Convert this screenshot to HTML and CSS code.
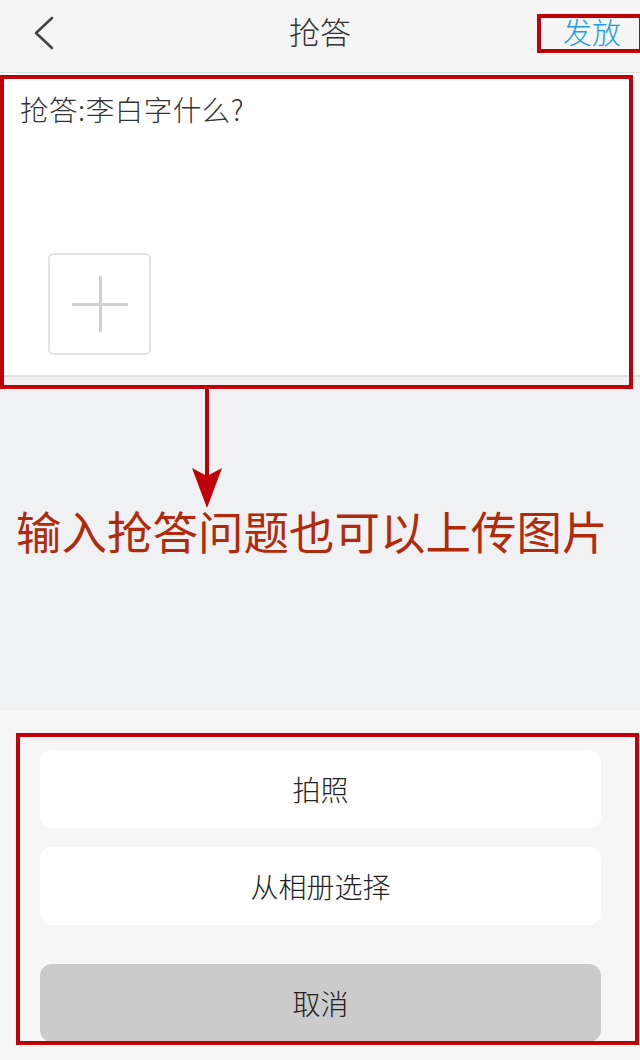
FILE: index.html
```html
<!DOCTYPE html>
<html lang="zh">
<head>
<meta charset="utf-8">
<title>抢答</title>
<link rel="stylesheet" href="styles.css">
</head>
<body>
<div class="page">
  <header class="topbar">
    <button class="back" aria-label="返回">
      <svg width="24" height="36" viewBox="0 0 24 36"><polyline points="19,2 3,17 19,32" fill="none" stroke="#444" stroke-width="2.6" stroke-linecap="round" stroke-linejoin="round"/></svg>
    </button>
    <h1 class="title">抢答</h1>
    <a class="publish">发放</a>
  </header>

  <section class="editor">
    <p class="question">抢答:李白字什么?</p>
    <div class="add-pic">
      <span class="plus-h"></span>
      <span class="plus-v"></span>
    </div>
  </section>

  <section class="middle">
    <p class="note">输入抢答问题也可以上传图片</p>
  </section>

  <section class="sheet">
    <div class="action">拍照</div>
    <div class="action">从相册选择</div>
    <div class="action cancel">取消</div>
  </section>

  <div class="mark mark-publish"></div>
  <div class="mark mark-editor"></div>
  <div class="mark mark-sheet"></div>
  <svg class="arrow" width="34" height="124" viewBox="0 0 34 124">
    <rect x="15" y="0" width="4" height="100" fill="#c00008"/>
    <polygon points="2,82 17,90 32,82 17,122" fill="#c00008"/>
  </svg>
</div>
</body>
</html>
```

FILE: styles.css
```css
* { box-sizing: border-box; }
html, body { margin: 0; padding: 0; }
body {
  font-family: "Noto Sans CJK SC", "Noto Sans", sans-serif;
  background: #f0f1f3;
}
.page {
  position: relative;
  width: 640px;
  height: 1060px;
  display: flex;
  flex-direction: column;
  overflow: hidden;
}
.topbar {
  height: 73px;
  flex: none;
  background: #f5f5f5;
  border-bottom: 1px solid #dcdcdc;
  display: grid;
  grid-template-columns: 120px 1fr 120px;
  align-items: center;
}
.back {
  border: 0;
  background: none;
  padding: 0 0 4px 33px;
  display: flex;
  align-items: center;
  justify-self: start;
}
.title {
  margin: 0;
  text-align: center;
  font-size: 31px;
  font-weight: 300;
  color: #333;
  line-height: 40px;
  padding-bottom: 10px;
}
.publish {
  justify-self: end;
  padding-right: 19px;
  padding-bottom: 10px;
  font-size: 29px;
  font-weight: 300;
  line-height: 40px;
  color: #1c9be8;
}
.editor {
  height: 304px;
  flex: none;
  background: #fff;
  border-bottom: 2px solid #e1e1e1;
  padding: 16px 20px 0;
}
.question {
  margin: 0;
  font-size: 28.5px;
  font-weight: 300;
  line-height: 40px;
  color: #333;
  letter-spacing: 0.5px;
}
.add-pic {
  position: relative;
  margin: 124px 0 0 28px;
  width: 103px;
  height: 102px;
  border: 2px solid #e2e2e2;
  border-radius: 6px;
}
.plus-h, .plus-v {
  position: absolute;
  background: #d0d0d0;
}
.plus-h { left: 22px; top: 48px; width: 56px; height: 3px; }
.plus-v { left: 49px; top: 21px; width: 3px; height: 56px; }
.middle {
  height: 333px;
  flex: none;
  padding: 123px 0 0 16px;
}
.note {
  margin: 0;
  font-size: 45.5px;
  line-height: 60px;
  color: #b12a0c;
  white-space: nowrap;
}
.sheet {
  flex: 1;
  background: #f6f6f6;
  padding: 40px 39px 0 40px;
  display: flex;
  flex-direction: column;
  gap: 19px;
}
.action {
  height: 78px;
  flex: none;
  background: #fff;
  border-radius: 12px;
  display: flex;
  align-items: center;
  justify-content: center;
  font-size: 28px;
  font-weight: 300;
  color: #222;
}
.action.cancel {
  margin-top: 20px;
  background: #cbcbcb;
}
.mark {
  position: absolute;
  border: 4px solid #c00008;
}
.mark-publish { left: 537px; top: 14px; width: 106px; height: 39px; }
.mark-editor { left: 0; top: 75px; width: 633px; height: 314px; }
.mark-sheet { left: 16px; top: 733px; width: 623px; height: 312px; }
.arrow { position: absolute; left: 190px; top: 386px; }
```
